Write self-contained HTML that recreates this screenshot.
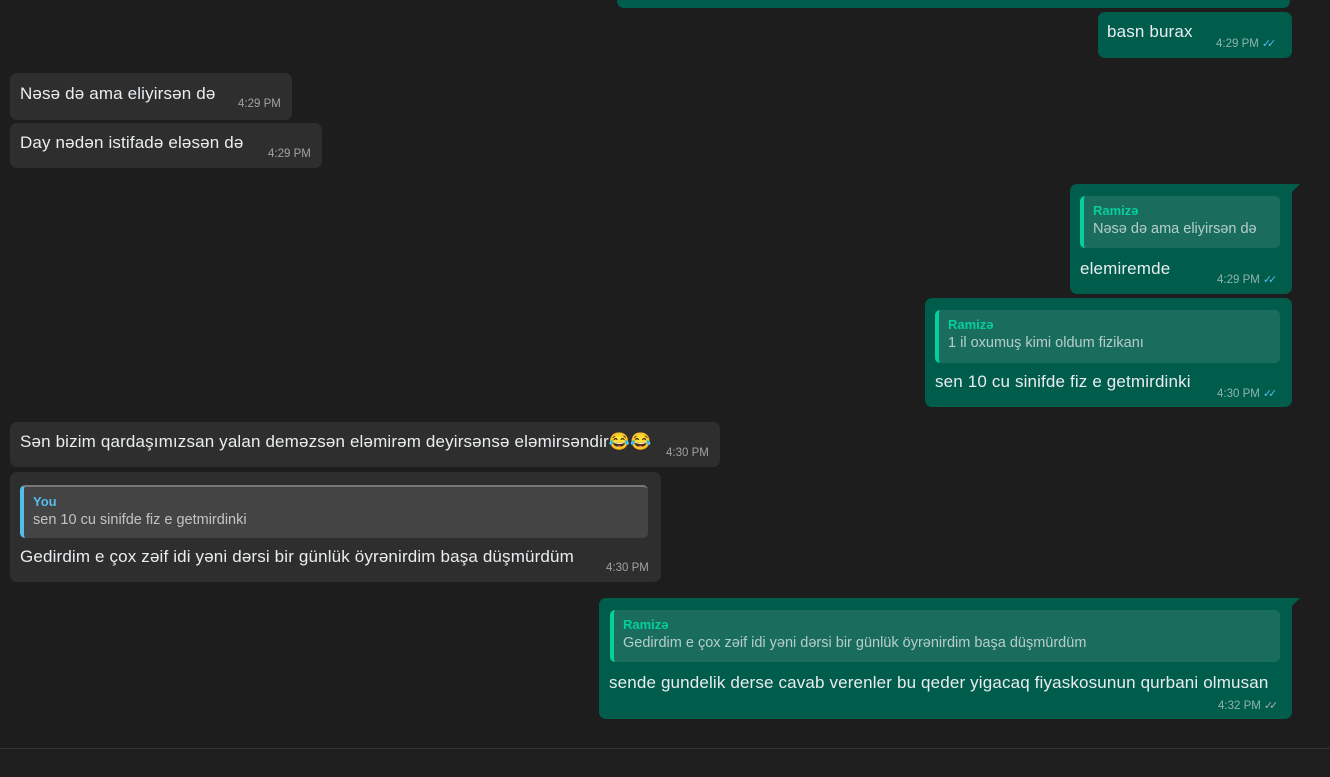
<!DOCTYPE html><html><head><style>
body{margin:0;width:1330px;height:776px;background:#1d1d1d;position:relative;overflow:hidden;font-family:"Liberation Sans",sans-serif;}
.b{position:absolute;border-radius:7px;color:#e9edef;font-size:17px;letter-spacing:0.15px;box-sizing:border-box;}
.i{background:#2e2e2e;}
.o{background:#005c4b;}
.t{position:absolute;font-size:11.5px;color:rgba(233,237,239,.6);white-space:nowrap;letter-spacing:0}
.q{position:absolute;border-radius:5px;box-sizing:border-box;border-left:4px solid #06cf9c;background:rgba(255,255,255,.1);padding:7px 0 0 9px;font-size:14.5px;color:rgba(233,237,239,.75);white-space:nowrap;overflow:hidden;letter-spacing:0}
.q b{display:block;font-size:13px;color:#06cf9c;font-weight:bold;margin-bottom:3px}
.x{position:absolute;white-space:nowrap}
.ck{color:#53bdeb;font-size:11px;margin-left:3px;letter-spacing:-4px}
.tail{position:absolute;width:0;height:0;border-top:8px solid #005c4b;border-right:8px solid transparent;}
</style></head><body>
<div class="b o" style="left:617px;top:-10px;width:673px;height:18px"></div>
<div class="b o" style="left:1098px;top:12px;width:194px;height:46px"><span class="x" style="left:9px;top:10px">basn burax</span><span class="t" style="left:118px;top:25px">4:29 PM<span class="ck">✓✓</span></span></div>
<div class="b i" style="left:10px;top:73px;width:282px;height:47px"><span class="x" style="left:10px;top:11px">Nəsə də ama eliyirsən də</span><span class="t" style="left:228px;top:25px">4:29 PM</span></div>
<div class="b i" style="left:10px;top:123px;width:312px;height:45px"><span class="x" style="left:10px;top:10px">Day nədən istifadə eləsən də</span><span class="t" style="left:258px;top:25px">4:29 PM</span></div>
<div class="b o" style="left:1070px;top:184px;width:222px;height:110px;border-top-right-radius:0"><div class="q" style="left:10px;top:12px;width:200px;height:52px"><b>Ramizə</b>Nəsə də ama eliyirsən də</div><span class="x" style="left:10px;top:75px">elemiremde</span><span class="t" style="left:147px;top:89px">4:29 PM<span class="ck">✓✓</span></span></div>
<div class="tail" style="left:1292px;top:184px"></div>
<div class="b o" style="left:925px;top:298px;width:367px;height:109px"><div class="q" style="left:10px;top:12px;width:345px;height:53px"><b>Ramizə</b>1 il oxumuş kimi oldum fizikanı</div><span class="x" style="left:10px;top:74px">sen 10 cu sinifde fiz e getmirdinki</span><span class="t" style="left:292px;top:89px">4:30 PM<span class="ck">✓✓</span></span></div>
<div class="b i" style="left:10px;top:422px;width:710px;height:45px"><span class="x" style="left:10px;top:10px">Sən bizim qardaşımızsan yalan deməzsən eləmirəm deyirsənsə eləmirsəndir😂😂</span><span class="t" style="left:656px;top:25px">4:30 PM</span></div>
<div class="b i" style="left:10px;top:472px;width:651px;height:110px"><div class="q" style="left:10px;top:13px;width:628px;height:53px;border-left-color:#53bdeb;background:#444;border-top:2px solid #777"><b style="color:#53bdeb">You</b>sen 10 cu sinifde fiz e getmirdinki</div><span class="x" style="left:10px;top:75px">Gedirdim e çox zəif idi yəni dərsi bir günlük öyrənirdim başa düşmürdüm</span><span class="t" style="left:596px;top:90px">4:30 PM</span></div>
<div class="b o" style="left:599px;top:598px;width:693px;height:121px;border-top-right-radius:0"><div class="q" style="left:11px;top:12px;width:670px;height:52px"><b>Ramizə</b>Gedirdim e çox zəif idi yəni dərsi bir günlük öyrənirdim başa düşmürdüm</div><span class="x" style="left:10px;top:75px">sende gundelik derse cavab verenler bu qeder yigacaq fiyaskosunun qurbani olmusan</span><span class="t" style="left:619px;top:101px">4:32 PM<span class="ck" style="color:#aaa">✓✓</span></span></div>
<div class="tail" style="left:1292px;top:598px"></div>
<div style="position:absolute;left:0;top:748px;width:1330px;height:28px;background:#1f1f1f;border-top:1px solid #333"></div>
</body></html>
